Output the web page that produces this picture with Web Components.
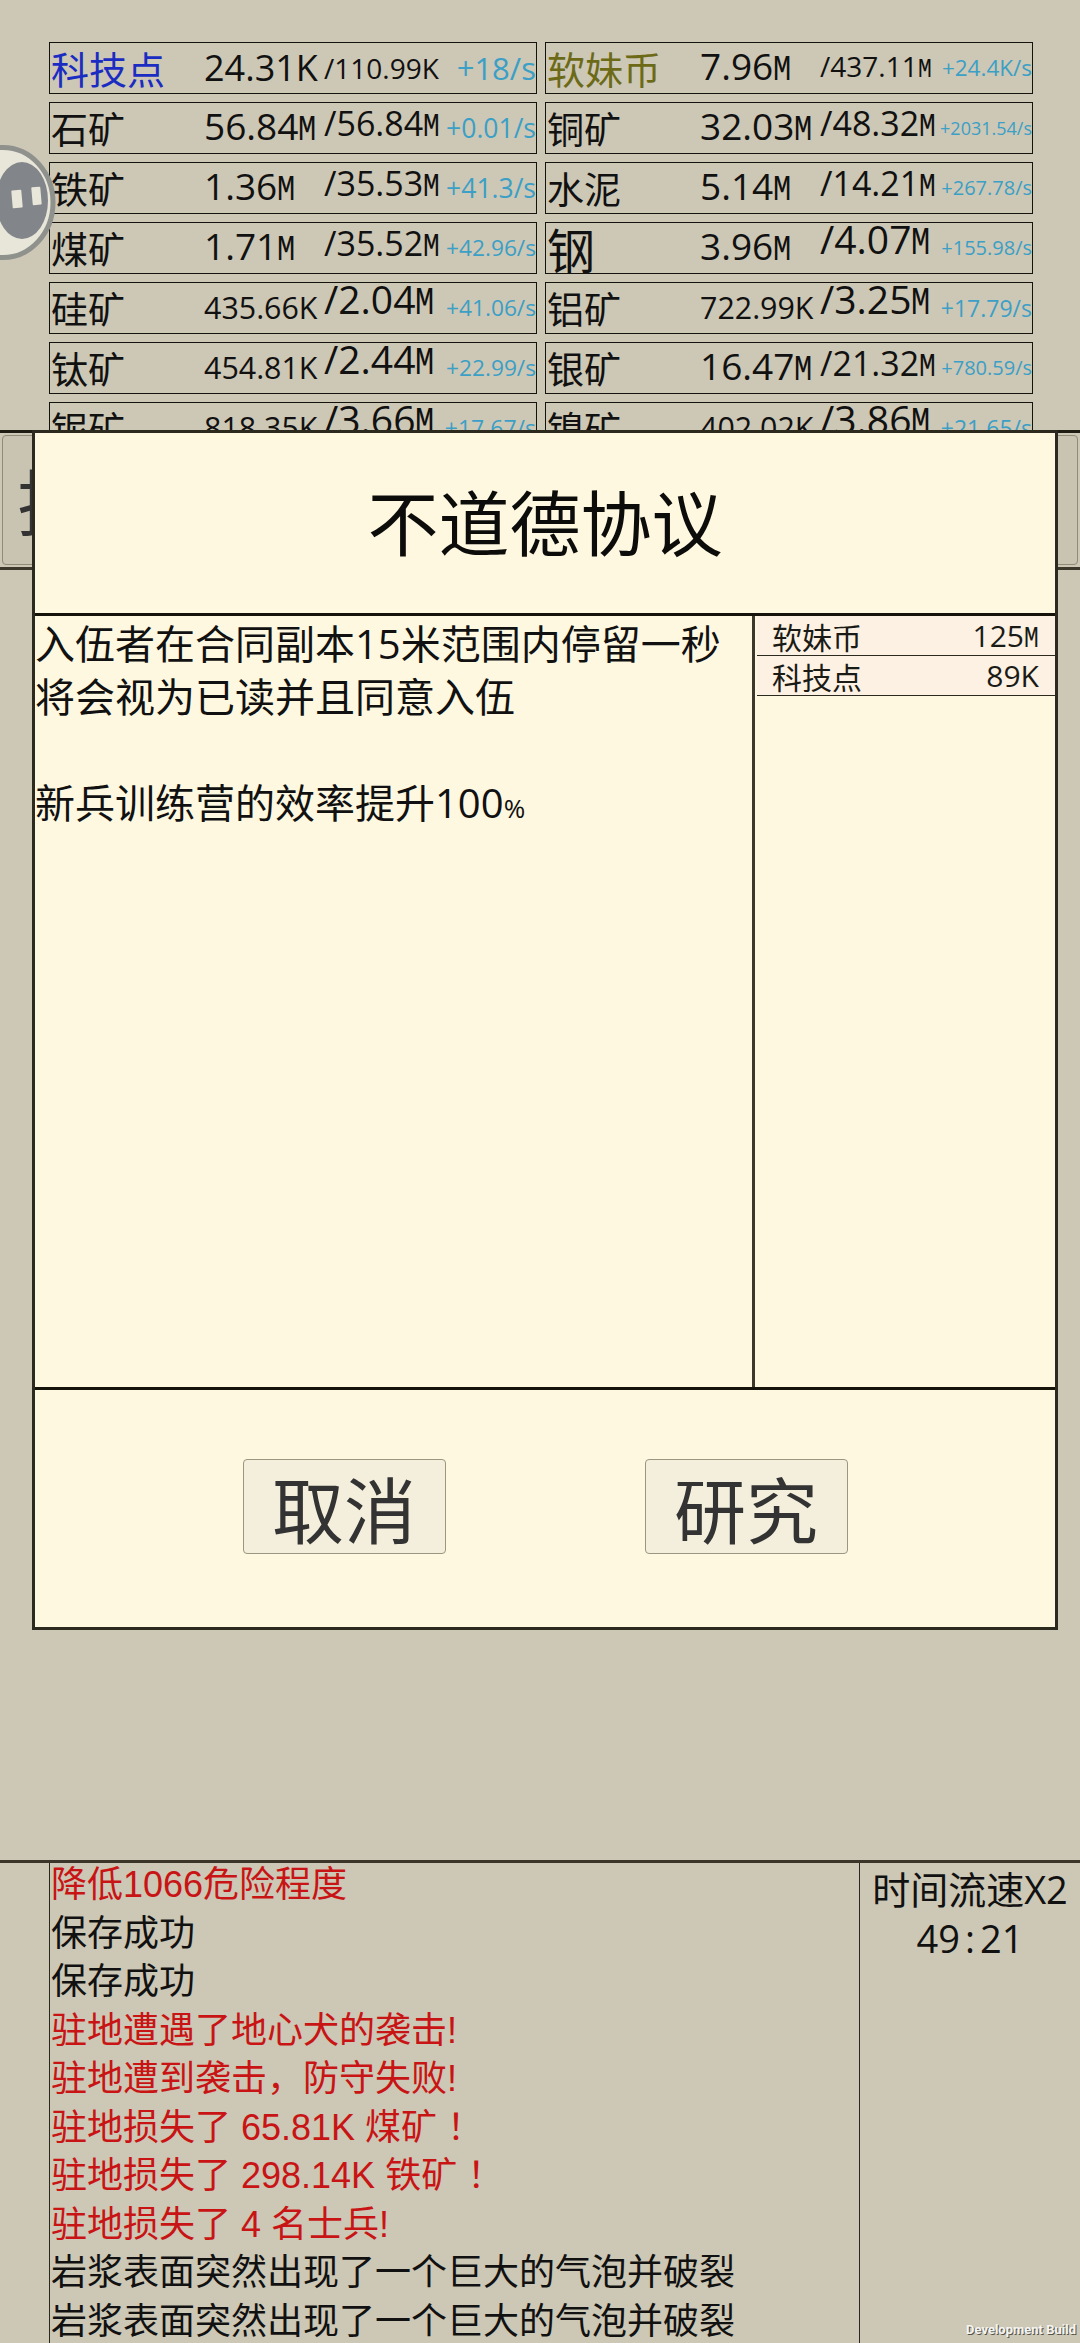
<!DOCTYPE html>
<html lang="zh">
<head>
<meta charset="utf-8">
<style>
    html, body { margin: 0; padding: 0; background: #cdc7b5; }
</style>
</head>
<body>
<game-screen>
    <resource-grid>
        <res-row tone="tech" name-size="38" value="24.31K" value-size="36" max="/110.99K" max-size="28" rate="+18/s" rate-size="31">科技点</res-row>
        <res-row tone="coin" name-size="38" value="7.96M" value-size="37" max="/437.11M" max-size="28" rate="+24.4K/s" rate-size="22.5">软妹币</res-row>
        <res-row name-size="37" value="56.84M" value-size="37" max="/56.84M" max-size="34" max-lift="7" rate="+0.01/s" rate-size="26.5">石矿</res-row>
        <res-row name-size="37" value="32.03M" value-size="37" max="/48.32M" max-size="34" max-lift="7" rate="+2031.54/s" rate-size="18">铜矿</res-row>
        <res-row name-size="37" value="1.36M" value-size="37" max="/35.53M" max-size="34" max-lift="7" rate="+41.3/s" rate-size="26.5">铁矿</res-row>
        <res-row name-size="37" value="5.14M" value-size="37" max="/14.21M" max-size="34" max-lift="7" rate="+267.78/s" rate-size="20">水泥</res-row>
        <res-row name-size="37" value="1.71M" value-size="37" max="/35.52M" max-size="34" max-lift="7" rate="+42.96/s" rate-size="22.7">煤矿</res-row>
        <res-row name-size="48" value="3.96M" value-size="37" max="/4.07M" max-size="39" max-lift="14" rate="+155.98/s" rate-size="20">钢</res-row>
        <res-row name-size="37" value="435.66K" value-size="30.4" max="/2.04M" max-size="39" max-lift="14" rate="+41.06/s" rate-size="22.7">硅矿</res-row>
        <res-row name-size="37" value="722.99K" value-size="30.4" max="/3.25M" max-size="39" max-lift="14" rate="+17.79/s" rate-size="23">铝矿</res-row>
        <res-row name-size="37" value="454.81K" value-size="30.4" max="/2.44M" max-size="39" max-lift="14" rate="+22.99/s" rate-size="22.7">钛矿</res-row>
        <res-row name-size="37" value="16.47M" value-size="37" max="/21.32M" max-size="34" max-lift="7" rate="+780.59/s" rate-size="20">银矿</res-row>
        <res-row name-size="37" value="818.35K" value-size="30.4" max="/3.66M" max-size="39" max-lift="14" rate="+17.67/s" rate-size="23">铌矿</res-row>
        <res-row name-size="37" value="402.02K" value-size="30.4" max="/3.86M" max-size="39" max-lift="14" rate="+21.65/s" rate-size="23">镍矿</res-row>
    </resource-grid>

    <tab-strip>技</tab-strip>

    <log-panel>
        <div slot="lines" class="bad">降低1066危险程度</div>
        <div slot="lines">保存成功</div>
        <div slot="lines">保存成功</div>
        <div slot="lines" class="bad">驻地遭遇了地心犬的袭击!</div>
        <div slot="lines" class="bad">驻地遭到袭击，防守失败!</div>
        <div slot="lines" class="bad">驻地损失了 65.81K 煤矿 ！</div>
        <div slot="lines" class="bad">驻地损失了 298.14K 铁矿 ！</div>
        <div slot="lines" class="bad">驻地损失了 4 名士兵!</div>
        <div slot="lines">岩浆表面突然出现了一个巨大的气泡并破裂</div>
        <div slot="lines">岩浆表面突然出现了一个巨大的气泡并破裂</div>
        <span slot="speed">时间流速X2</span>
        <span slot="clock">49<span style="margin: 0 5px">:</span>21</span>
    </log-panel>

    <pause-float></pause-float>

    <research-modal>
        <span slot="title">不道德协议</span>
        <span slot="desc">入伍者在合同副本15米范围内停留一秒<br>将会视为已读并且同意入伍<br><br>新兵训练营的效率提升100<span style="font-size: 26px">%</span></span>
        <cost-row slot="costs" amount="125M">软妹币</cost-row>
        <cost-row slot="costs" amount="89K">科技点</cost-row>
        <modal-button slot="actions">取消</modal-button>
        <modal-button slot="actions">研究</modal-button>
    </research-modal>

    <dev-badge>Development Build</dev-badge>
</game-screen>

<script>
// shared font stacks
const CJK = '"Noto Sans CJK SC", sans-serif';
const NUM = '"Open Sans", "Noto Sans CJK SC", sans-serif';
const LOG = '"Liberation Sans", "Noto Sans CJK SC", sans-serif';

function shadow(el, html) {
    const t = document.createElement("template");
    t.innerHTML = html;
    el.attachShadow({ mode: "open" }).appendChild(t.content.cloneNode(true));
    return el.shadowRoot;
}

// The narrow block M the game font uses for millions
function withUnit(text) {
    return text.endsWith("M") ? `${text.slice(0, -1)}<span class="unit">M</span>` : text;
}

class GameScreen extends HTMLElement {
    constructor() {
        super();
        shadow(this, `
            <style>
            :host {
                display: flex;
                flex-direction: column;
                position: relative;
                width: 1080px;
                height: 2343px;
                overflow: hidden;
                background: #cdc7b5;
                color: #111;
                font-family: ${CJK};
            }
            </style>
            <slot></slot>
        `);
    }
}

class ResourceGrid extends HTMLElement {
    constructor() {
        super();
        shadow(this, `
            <style>
            :host {
                display: grid;
                grid-template-columns: 488px 488px;
                column-gap: 8px;
                row-gap: 8px;
                align-content: start;
                box-sizing: border-box;
                height: 430px;
                padding: 42px 0 0 49px;
                overflow: hidden;
                flex: none;
            }
            </style>
            <slot></slot>
        `);
    }
}

class ResRow extends HTMLElement {
    connectedCallback() {
        const a = (n) => this.getAttribute(n);
        shadow(this, `
            <style>
            :host {
                display: grid;
                grid-template-columns: 153px 120px 1fr auto;
                grid-template-rows: 50px;
                align-items: center;
                box-sizing: border-box;
                height: 52px;
                border: 1px solid #14130e;
                padding-left: 1px;
                white-space: nowrap;
                line-height: 1;
            }
            :host([tone="tech"]) .name { color: #1a2cc2; }
            :host([tone="coin"]) .name { color: #6c6a16; }
            .name { font-family: ${CJK}; font-size: ${a("name-size")}px; }
            .value, .max { font-family: ${NUM}; color: #111; }
            .value { font-size: ${a("value-size")}px; }
            .max { font-size: ${a("max-size")}px; margin-bottom: ${a("max-lift") || 0}px; }
            .rate { font-family: ${NUM}; font-size: ${a("rate-size")}px; color: #3b9fc6; }
            .unit {
                display: inline-block;
                width: .5em;
                font-family: "Liberation Mono", monospace;
                transform: scaleX(.82);
                transform-origin: left;
            }
            </style>
            <span class="name"><slot></slot></span>
            <span class="value">${withUnit(a("value"))}</span>
            <span class="max">${withUnit(a("max"))}</span>
            <span class="rate">${a("rate")}</span>
        `);
    }
}

// The bar behind the dialog, only its two ends stay visible
class TabStrip extends HTMLElement {
    constructor() {
        super();
        shadow(this, `
            <style>
            :host {
                display: block;
                box-sizing: border-box;
                height: 140px;
                border-top: 3px solid #1f1c12;
                border-bottom: 3px solid #3c392c;
                padding: 2px;
                flex: none;
            }
            .tab {
                box-sizing: border-box;
                height: 100%;
                border: 1px solid #8f8b78;
                border-radius: 4px;
                background: #c9c4b2;
                padding-left: 14px;
                font-size: 72px;
                line-height: 126px;
                color: #333;
            }
            </style>
            <div class="tab"><slot></slot></div>
        `);
    }
}

class LogPanel extends HTMLElement {
    constructor() {
        super();
        shadow(this, `
            <style>
            :host {
                display: grid;
                grid-template-columns: 49px 811px 1fr;
                margin-top: auto;
                box-sizing: border-box;
                height: 483px;
                border-top: 3px solid #3a3528;
                flex: none;
            }
            .lines {
                grid-column: 2;
                border-left: 1px solid #2a281e;
                border-right: 1px solid #2a281e;
                padding-left: 1px;
                font-family: ${LOG};
                font-size: 36px;
                line-height: 48.5px;
                color: #111;
            }
            .scroll { margin-top: -2px; }
            ::slotted(.bad) { color: #c81414; }
            .side {
                display: flex;
                flex-direction: column;
                align-items: center;
                padding-top: 2px;
                font-family: ${NUM};
                font-size: 38px;
                line-height: 49px;
            }
            </style>
            <div class="lines"><div class="scroll"><slot name="lines"></slot></div></div>
            <div class="side">
                <slot name="speed"></slot>
                <slot name="clock"></slot>
            </div>
        `);
    }
}

class PauseFloat extends HTMLElement {
    constructor() {
        super();
        shadow(this, `
            <style>
            :host {
                position: absolute;
                left: -57px;
                top: 145px;
                width: 120px;
                height: 116px;
            }
            svg { display: block; }
            </style>
            <svg width="120" height="116" viewBox="0 0 120 116">
                <ellipse cx="60" cy="57.5" rx="50" ry="55" fill="#e8e5d9" stroke="#8f918d" stroke-width="5"/>
                <ellipse cx="79" cy="55.5" rx="26" ry="38.5" fill="#82868a"/>
                <rect x="69" y="45" width="10" height="18" rx="1" fill="#e9e6da" transform="rotate(-5 74 54)"/>
                <rect x="89" y="42" width="9" height="18" rx="1" fill="#e9e6da" transform="rotate(-5 93 51)"/>
            </svg>
        `);
    }
}

class ResearchModal extends HTMLElement {
    constructor() {
        super();
        shadow(this, `
            <style>
            :host {
                position: absolute;
                left: 32px;
                top: 430px;
                width: 1026px;
                height: 1200px;
                box-sizing: border-box;
                display: grid;
                grid-template-rows: 180px 777px 1fr;
                border: 3px solid #2c2a1e;
                background: #fef8e1;
            }
            .title {
                display: flex;
                align-items: center;
                justify-content: center;
                padding-bottom: 8px;
                font-size: 71px;
                color: #0c0c0a;
            }
            .body {
                display: grid;
                grid-template-columns: 717px 1fr;
                border-top: 3px solid #15130a;
                border-bottom: 3px solid #15130a;
            }
            .desc {
                font-family: ${NUM};
                font-size: 40px;
                line-height: 53px;
                padding-top: 1px;
                white-space: nowrap;
                color: #111;
            }
            .costs {
                border-left: 3px solid #3c392c;
                padding-left: 2px;
                font-size: 0;
            }
            .actions {
                display: flex;
                justify-content: center;
                align-items: center;
                gap: 199px;
                padding-bottom: 4px;
            }
            </style>
            <div class="title"><slot name="title"></slot></div>
            <div class="body">
                <div class="desc"><slot name="desc"></slot></div>
                <div class="costs"><slot name="costs"></slot></div>
            </div>
            <div class="actions"><slot name="actions"></slot></div>
        `);
    }
}

class CostRow extends HTMLElement {
    connectedCallback() {
        shadow(this, `
            <style>
            :host {
                display: flex;
                justify-content: space-between;
                align-items: center;
                box-sizing: border-box;
                height: 40px;
                border-bottom: 1px solid #2c2a1e;
                padding: 0 16px 0 15px;
                background: #fdf1e3;
                font-size: 30px;
                color: #1a1a16;
            }
            .amount { font-family: ${NUM}; }
            .unit {
                display: inline-block;
                width: .5em;
                font-family: "Liberation Mono", monospace;
                transform: scaleX(.82);
                transform-origin: left;
            }
            </style>
            <span><slot></slot></span>
            <span class="amount">${withUnit(this.getAttribute("amount"))}</span>
        `);
    }
}

class ModalButton extends HTMLElement {
    constructor() {
        super();
        shadow(this, `
            <style>
            :host {
                display: flex;
                align-items: center;
                justify-content: center;
                box-sizing: border-box;
                width: 203px;
                height: 95px;
                border: 1px solid #9a9680;
                border-radius: 4px;
                background: #f4efdc;
                font-size: 72px;
                color: #333;
            }
            </style>
            <slot></slot>
        `);
    }
}

class DevBadge extends HTMLElement {
    constructor() {
        super();
        shadow(this, `
            <style>
            :host {
                position: absolute;
                right: 4px;
                bottom: 5px;
                font-family: Roboto, sans-serif;
                font-weight: 700;
                font-size: 13px;
                line-height: 16px;
                color: #f4f4f0;
                text-shadow: 1px 1px 0 #55534a;
            }
            </style>
            <slot></slot>
        `);
    }
}

customElements.define("game-screen", GameScreen);
customElements.define("resource-grid", ResourceGrid);
customElements.define("res-row", ResRow);
customElements.define("tab-strip", TabStrip);
customElements.define("log-panel", LogPanel);
customElements.define("pause-float", PauseFloat);
customElements.define("research-modal", ResearchModal);
customElements.define("cost-row", CostRow);
customElements.define("modal-button", ModalButton);
customElements.define("dev-badge", DevBadge);
</script>
</body>
</html>
